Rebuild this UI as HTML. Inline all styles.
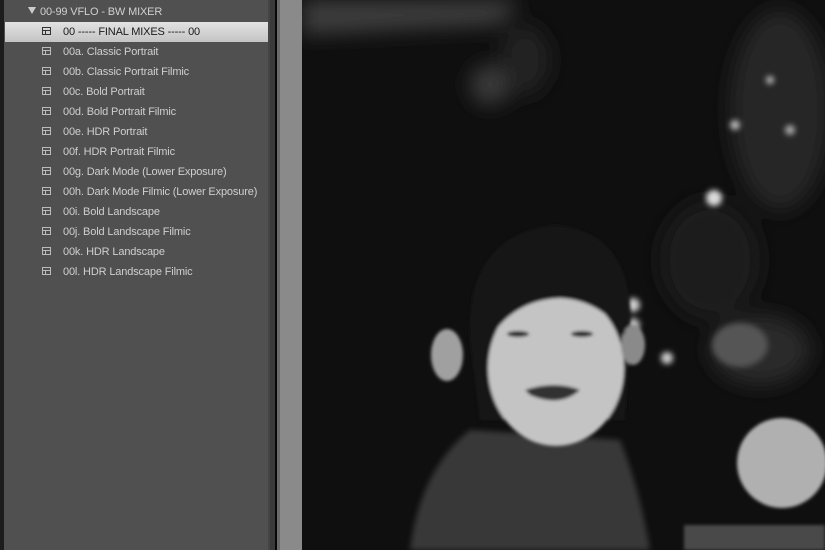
<!DOCTYPE html>
<html><head><style>
html,body{margin:0;padding:0;width:825px;height:550px;overflow:hidden;background:#111;font-family:"Liberation Sans",sans-serif}
#panel{position:absolute;left:0;top:0;width:268px;height:550px;background:#505050;}
#panel .edge{position:absolute;left:0;top:0;width:4px;height:550px;background:#1c1c1c}
.row{position:absolute;left:5px;width:263px;height:20px;font-size:11px;letter-spacing:-0.15px;color:#cfcfcf;line-height:21px}
.row .ic{position:absolute;left:37px;top:5px;width:9px;height:8px;border:1px solid #bbb;box-sizing:border-box}
.row .ic:before{content:"";position:absolute;left:0;right:0;top:2px;height:0;border-top:1px solid #bbb}
.row .ic:after{content:"";position:absolute;left:2px;top:2px;bottom:0;border-left:1px solid #bbb}
.row span{position:absolute;left:58px}
.sel{background:linear-gradient(#e2e2e2,#c4c4c4);color:#1a1a1a}
.sel .ic,.sel .ic:before,.sel .ic:after{border-color:#333}
</style></head><body>
<div id="panel"><div class="edge"></div>
<div style="position:absolute;left:28px;top:7px;width:0;height:0;border-left:4px solid transparent;border-right:4px solid transparent;border-top:7px solid #ccc"></div>
<div style="position:absolute;left:40px;top:2px;font-size:11px;letter-spacing:-0.15px;color:#d0d0d0;line-height:20px">00-99 VFLO - BW MIXER</div>
<div class="row sel" style="top:22px"><div class="ic"></div><span>00 ----- FINAL MIXES ----- 00</span></div>
<div class="row" style="top:42px"><div class="ic"></div><span>00a. Classic Portrait</span></div>
<div class="row" style="top:62px"><div class="ic"></div><span>00b. Classic Portrait Filmic</span></div>
<div class="row" style="top:82px"><div class="ic"></div><span>00c. Bold Portrait</span></div>
<div class="row" style="top:102px"><div class="ic"></div><span>00d. Bold Portrait Filmic</span></div>
<div class="row" style="top:122px"><div class="ic"></div><span>00e. HDR Portrait</span></div>
<div class="row" style="top:142px"><div class="ic"></div><span>00f. HDR Portrait Filmic</span></div>
<div class="row" style="top:162px"><div class="ic"></div><span>00g. Dark Mode (Lower Exposure)</span></div>
<div class="row" style="top:182px"><div class="ic"></div><span>00h. Dark Mode Filmic (Lower Exposure)</span></div>
<div class="row" style="top:202px"><div class="ic"></div><span>00i. Bold Landscape</span></div>
<div class="row" style="top:222px"><div class="ic"></div><span>00j. Bold Landscape Filmic</span></div>
<div class="row" style="top:242px"><div class="ic"></div><span>00k. HDR Landscape</span></div>
<div class="row" style="top:262px"><div class="ic"></div><span>00l. HDR Landscape Filmic</span></div>
</div>
<div style="position:absolute;left:268px;top:0;width:2px;height:550px;background:#444"></div>
<div style="position:absolute;left:270px;top:0;width:5px;height:550px;background:#3a3a3a"></div>
<div style="position:absolute;left:275px;top:0;width:2px;height:550px;background:#080808"></div>
<div style="position:absolute;left:277px;top:0;width:3px;height:550px;background:#6a6a6a"></div>
<div style="position:absolute;left:280px;top:0;width:22px;height:550px;background:#8a8a8a"></div>
<svg style="position:absolute;left:302px;top:0" width="523" height="550" viewBox="302 0 523 550">
<defs>
<filter id="b8"><feGaussianBlur stdDeviation="10"/></filter>
<filter id="b3"><feGaussianBlur stdDeviation="3"/></filter>
<filter id="b1"><feGaussianBlur stdDeviation="1.5"/></filter>
</defs>
<rect x="302" y="0" width="523" height="550" fill="#0f0f0f"/>
<g filter="url(#b8)">
<path d="M302 0 H520 L500 25 L302 35 Z" fill="#3e3e3e"/>
<ellipse cx="490" cy="85" rx="20" ry="20" fill="#3a3a3a"/>
<ellipse cx="525" cy="60" rx="25" ry="35" fill="#222"/>
<ellipse cx="780" cy="110" rx="50" ry="100" fill="#262626"/>
<ellipse cx="760" cy="350" rx="50" ry="35" fill="#2c2c2c"/>
<ellipse cx="710" cy="260" rx="50" ry="60" fill="#1a1a1a"/>
</g>
<g filter="url(#b3)">
<circle cx="714" cy="198" r="8" fill="#ddd"/>
<circle cx="633" cy="305" r="7" fill="#ccc"/>
<circle cx="633" cy="325" r="7" fill="#bbb"/>
<circle cx="667" cy="358" r="6" fill="#ccc"/>
<circle cx="735" cy="125" r="5" fill="#bbb"/>
<circle cx="790" cy="130" r="5" fill="#aaa"/>
<circle cx="770" cy="80" r="4" fill="#bbb"/>
<path d="M410 550 Q420 470 470 430 L620 440 Q640 490 650 550 Z" fill="#383838"/>
<ellipse cx="740" cy="345" rx="28" ry="22" fill="#555"/>
</g>
<g filter="url(#b1)">
<path d="M470 340 Q465 235 555 225 Q635 232 630 330 L625 420 L480 420 Z" fill="#181818"/>
<ellipse cx="556" cy="368" rx="68" ry="78" fill="#c4c4c4"/>
<ellipse cx="447" cy="355" rx="16" ry="26" fill="#a0a0a0"/>
<ellipse cx="633" cy="345" rx="12" ry="20" fill="#8a8a8a"/>
<path d="M486 345 Q485 280 555 270 Q625 280 625 335 Q600 300 560 298 Q510 300 486 345 Z" fill="#181818"/>
<ellipse cx="518" cy="334" rx="11" ry="3" fill="#222"/>
<ellipse cx="582" cy="334" rx="11" ry="3" fill="#222"/>
<path d="M525 390 Q555 380 580 390 Q560 408 530 395 Z" fill="#333"/>
<circle cx="782" cy="463" r="45" fill="#b0b0b0"/>
<rect x="684" y="525" width="141" height="25" fill="#4a4a4a"/>
</g>
</svg>
</body></html>
